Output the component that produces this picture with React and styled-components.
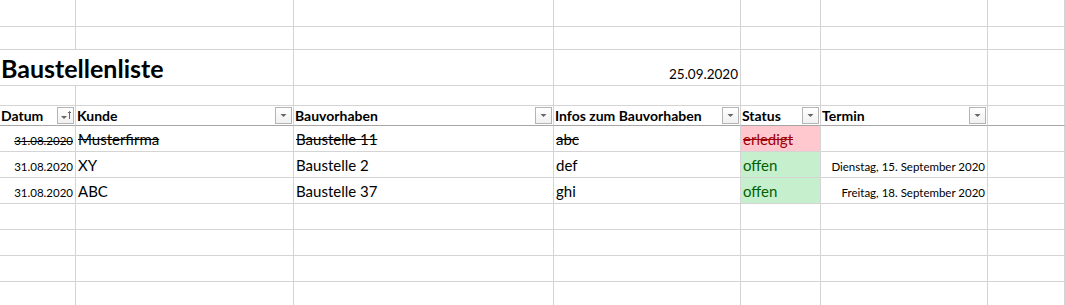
import React from 'react';
import styled, { createGlobalStyle, css } from 'styled-components';

const GlobalStyle = createGlobalStyle`
    html, body {
        margin: 0;
        padding: 0;
        background: #ffffff;
    }
    body {
        font-family: Lato, 'Liberation Sans', sans-serif;
        color: #000000;
    }
`;

const COLS = [
    { key: 'datum', label: 'Datum', sorted: true },
    { key: 'kunde', label: 'Kunde' },
    { key: 'bauvorhaben', label: 'Bauvorhaben' },
    { key: 'infos', label: 'Infos zum Bauvorhaben' },
    { key: 'status', label: 'Status' },
    { key: 'termin', label: 'Termin' },
];

const rows = [
    {
        datum: '31.08.2020',
        kunde: 'Musterfirma',
        bauvorhaben: 'Baustelle 11',
        infos: 'abc',
        status: 'erledigt',
        termin: '',
        done: true,
    },
    {
        datum: '31.08.2020',
        kunde: 'XY',
        bauvorhaben: 'Baustelle 2',
        infos: 'def',
        status: 'offen',
        termin: 'Dienstag, 15. September 2020',
    },
    {
        datum: '31.08.2020',
        kunde: 'ABC',
        bauvorhaben: 'Baustelle 37',
        infos: 'ghi',
        status: 'offen',
        termin: 'Freitag, 18. September 2020',
    },
];

// Filter-Pfeil im Tabellenkopf
const FilterButton = ({ sorted }) => (
    <FilterBox>
        <svg width="15" height="15" viewBox="0 0 15 15">
            {sorted ? (
                <>
                    <path d="M3 8 L9 8 L6 11 Z" fill="#666666" />
                    <path
                        d="M11.5 11 L11.5 3.5 M10 5 L11.5 3.5 L13 5"
                        stroke="#666666"
                        strokeWidth="1"
                        fill="none"
                    />
                </>
            ) : (
                <path d="M4.5 6 L10.5 6 L7.5 9 Z" fill="#666666" />
            )}
        </svg>
    </FilterBox>
);

const statusTone = (row) => (row.status === 'erledigt' ? 'bad' : 'good');

export default function App() {
    const blank = (n, prefix) =>
        Array.from({ length: n }).map((_, i) => (
            <Cell key={`${prefix}-${i}`} />
        ));

    return (
        <>
            <GlobalStyle />
            <Sheet>
                {blank(7, 'r1')}
                {blank(7, 'r2')}

                <Cell span={2}>
                    <Title>Baustellenliste</Title>
                </Cell>
                <Cell />
                <Cell align="right">
                    <DateText>25.09.2020</DateText>
                </Cell>
                <Cell />
                <Cell />
                <Cell />

                {blank(7, 'r4')}

                {COLS.map((col) => (
                    <HeaderCell key={col.key}>
                        <HeaderLabel>{col.label}</HeaderLabel>
                        <FilterButton sorted={col.sorted} />
                    </HeaderCell>
                ))}
                <HeaderCell />

                {rows.map((row, i) => (
                    <React.Fragment key={i}>
                        <Cell align="right">
                            <Text small strike={row.done}>
                                {row.datum}
                            </Text>
                        </Cell>
                        <Cell>
                            <Text strike={row.done}>{row.kunde}</Text>
                        </Cell>
                        <Cell>
                            <Text strike={row.done}>{row.bauvorhaben}</Text>
                        </Cell>
                        <Cell>
                            <Text strike={row.done}>{row.infos}</Text>
                        </Cell>
                        <StatusCell tone={statusTone(row)}>
                            <Text strike={row.done}>{row.status}</Text>
                        </StatusCell>
                        <Cell align="right">
                            <Text small strike={row.done}>
                                {row.termin}
                            </Text>
                        </Cell>
                        <Cell />
                    </React.Fragment>
                ))}

                {blank(7, 'r9')}
                {blank(7, 'r10')}
                {blank(7, 'r11')}
                {blank(7, 'r12')}
            </Sheet>
        </>
    );
}

const Sheet = styled.div`
    display: grid;
    width: 1065px;
    height: 305px;
    overflow: hidden;
    grid-template-columns: 76px 218px 260px 187px 80px 167px 1fr;
    grid-template-rows: 27px 23px 36px 20px 20px 26px 26px 26px 26px 26px 26px 26px;
`;

const Cell = styled.div`
    grid-column: span ${(p) => p.span || 1};
    display: flex;
    align-items: flex-end;
    justify-content: ${(p) => (p.align === 'right' ? 'flex-end' : 'flex-start')};
    padding: 0 2px 2px 2px;
    box-sizing: border-box;
    border-right: 1px solid #d4d4d4;
    border-bottom: 1px solid #d4d4d4;
    white-space: nowrap;
    overflow: hidden;
    min-width: 0;
`;

const StatusCell = styled(Cell)`
    ${(p) =>
        p.tone === 'bad'
            ? css`
                  background: #ffc7ce;
                  color: #9c0006;
              `
            : css`
                  background: #c6efce;
                  color: #006100;
              `}
`;

const HeaderCell = styled(Cell)`
    align-items: center;
    justify-content: space-between;
    padding: 0 1px 0 1px;
    border-bottom: 1px solid #a6a6a6;
`;

const Title = styled.span`
    font-size: 25px;
    font-weight: 700;
    line-height: 30px;
    margin-left: -1px;
`;

const DateText = styled.span`
    font-size: 13.5px;
    line-height: 18px;
`;

const HeaderLabel = styled.span`
    font-size: 14px;
    font-weight: 700;
    line-height: 18px;
`;

const Text = styled.span`
    font-size: ${(p) => (p.small ? '11.5px' : '15px')};
    line-height: ${(p) => (p.small ? '16px' : '20px')};
    text-decoration: ${(p) => (p.strike ? 'line-through' : 'none')};
`;

const FilterBox = styled.div`
    width: 15px;
    height: 15px;
    border: 1px solid #b4b4b4;
    background: linear-gradient(#ffffff, #f1f1f1);
    display: flex;
    flex-shrink: 0;
`;
